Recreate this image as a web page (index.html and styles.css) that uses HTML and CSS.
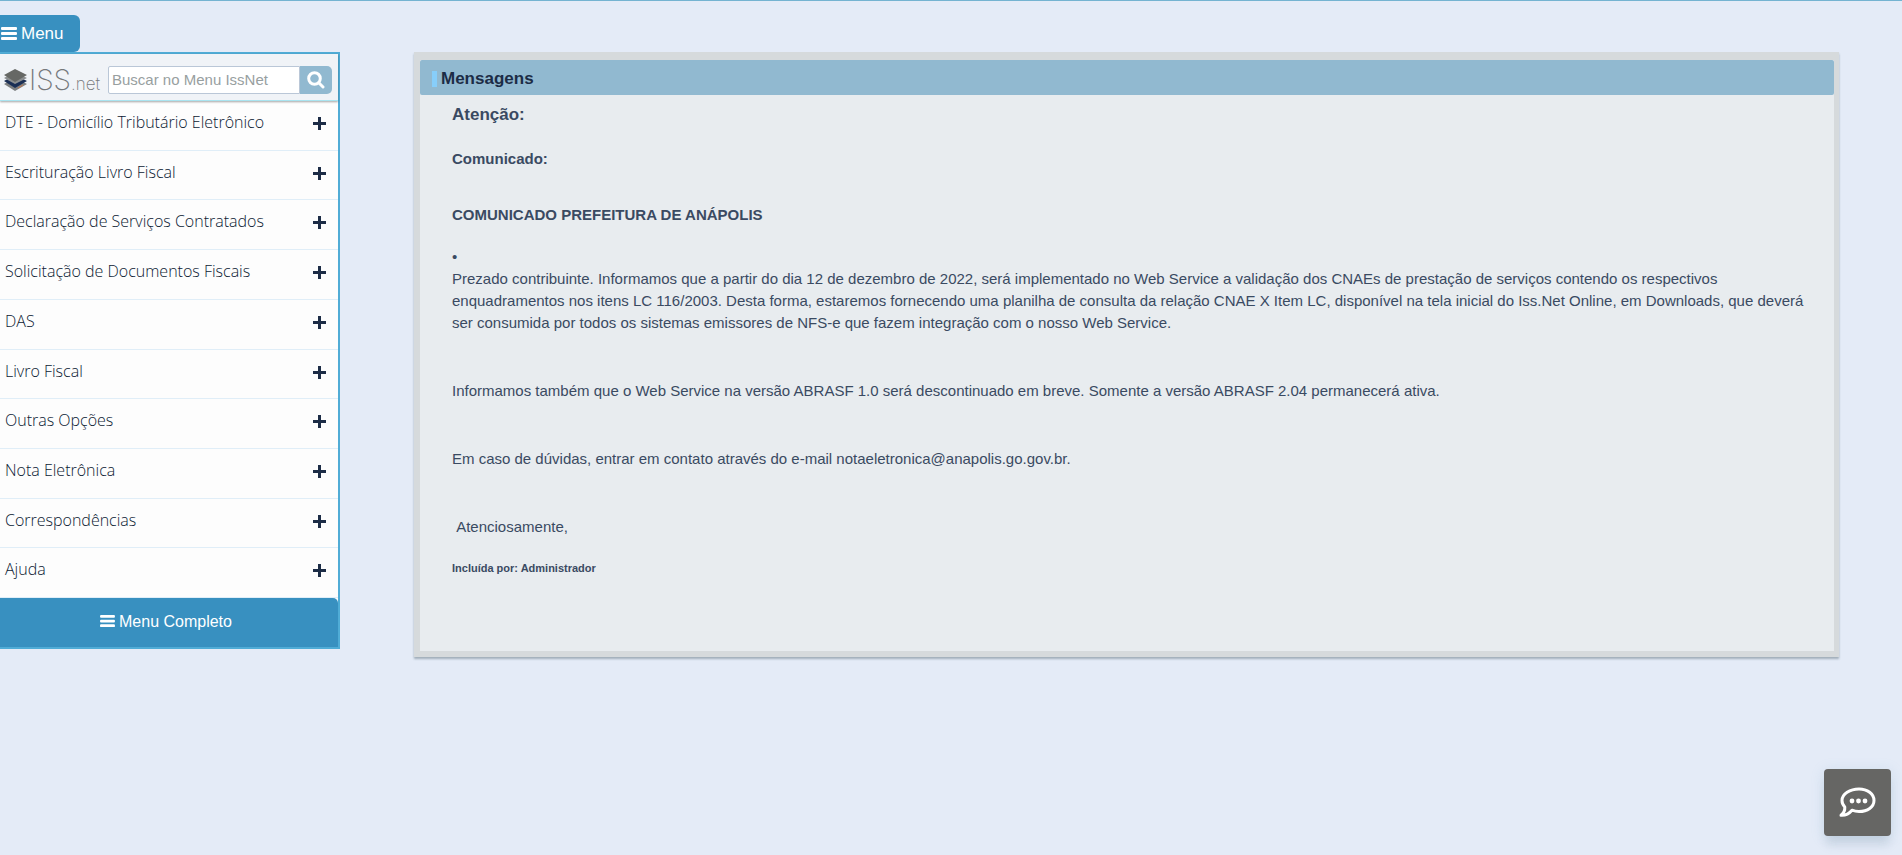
FILE: index.html
```html
<!DOCTYPE html>
<html lang="pt-br">
<head>
  <meta charset="UTF-8">
  <meta name="viewport" content="width=device-width, initial-scale=1.0">
  <title>ISS.net Online</title>
  <link rel="stylesheet" href="styles.css">
</head>
<body>
  <div class="pagina">
    <aside class="lateral">
      <button type="button" class="btn-menu">
        <svg width="16" height="14" viewBox="0 0 16 14" fill="currentColor" aria-hidden="true"><rect y="0" width="16" height="3" rx="1"/><rect y="5" width="16" height="3" rx="1"/><rect y="10" width="16" height="3" rx="1"/></svg>
        Menu
      </button>

      <nav class="menu">
        <form class="busca">
          <a href="#" class="logo" aria-label="ISS.net">
            <svg width="23" height="24" viewBox="0 0 23 24" aria-hidden="true">
              <path d="M0 16 L11 10 L23 16 L11 23 Z" fill="#7d7f80"/>
              <path d="M0 13 L11 7 L23 13 L11 20 Z" fill="#1b2f55"/>
              <path d="M14 20 L19 17" stroke="#c47a50" stroke-width="1"/>
              <path d="M0 10 L11 4 L23 10 L11 16 Z" fill="#8b8e8f"/>
              <path d="M0 7 L11 1 L23 7 L11 14 Z" fill="#666865"/>
            </svg>
            <span class="logo-iss">ISS</span><span class="logo-net">.net</span>
          </a>
          <input type="text" class="busca-campo" placeholder="Buscar no Menu IssNet" aria-label="Buscar no Menu IssNet">
          <button type="submit" class="busca-btn" aria-label="Buscar">
            <svg width="18" height="18" viewBox="0 0 18 18" fill="none" stroke="#fff" aria-hidden="true"><circle cx="7.500" cy="7.500" r="5.800" stroke-width="3"/><path d="M12 12 L16 16" stroke-width="3" stroke-linecap="round"/></svg>
          </button>
        </form>

        <ul class="lista">
          <li><a href="#">DTE - Domicílio Tributário Eletrônico <span class="mais"></span></a></li>
          <li><a href="#">Escrituração Livro Fiscal <span class="mais"></span></a></li>
          <li><a href="#">Declaração de Serviços Contratados <span class="mais"></span></a></li>
          <li><a href="#">Solicitação de Documentos Fiscais <span class="mais"></span></a></li>
          <li><a href="#">DAS <span class="mais"></span></a></li>
          <li><a href="#">Livro Fiscal <span class="mais"></span></a></li>
          <li><a href="#">Outras Opções <span class="mais"></span></a></li>
          <li><a href="#">Nota Eletrônica <span class="mais"></span></a></li>
          <li><a href="#">Correspondências <span class="mais"></span></a></li>
          <li><a href="#">Ajuda <span class="mais"></span></a></li>
        </ul>

        <button type="button" class="btn-completo">
          <svg width="15" height="13" viewBox="0 0 16 14" fill="currentColor" aria-hidden="true"><rect y="0" width="16" height="3" rx="1"/><rect y="5" width="16" height="3" rx="1"/><rect y="10" width="16" height="3" rx="1"/></svg>
          Menu Completo
        </button>
      </nav>
    </aside>

    <main class="mensagens">
      <h1>Mensagens</h1>
      <div class="conteudo">
        <h2>Atenção:</h2>
        <h3 class="comunicado">Comunicado:</h3>
        <h3 class="titulo">COMUNICADO PREFEITURA DE ANÁPOLIS</h3>
        <p class="texto">•<br>Prezado contribuinte. Informamos que a partir do dia 12 de dezembro de 2022, será implementado no Web Service a validação dos CNAEs de prestação de serviços contendo os respectivos enquadramentos nos itens LC 116/2003. Desta forma, estaremos fornecendo uma planilha de consulta da relação CNAE X Item LC, disponível na tela inicial do Iss.Net Online, em Downloads, que deverá ser consumida por todos os sistemas emissores de NFS-e que fazem integração com o nosso Web Service.</p>
        <p class="texto">Informamos também que o Web Service na versão ABRASF 1.0 será descontinuado em breve. Somente a versão ABRASF 2.04 permanecerá ativa.</p>
        <p class="texto">Em caso de dúvidas, entrar em contato através do e-mail notaeletronica@anapolis.go.gov.br.</p>
        <p class="texto">&nbsp;Atenciosamente,</p>
        <p class="autor">Incluída por: Administrador</p>
      </div>
    </main>
  </div>

  <button type="button" class="chat" aria-label="Chat">
    <svg width="37" height="31" viewBox="0 0 37 31" fill="none" stroke="#fff" aria-hidden="true">
      <path d="M20 2 C28.500 2 35 7 35 13.500 C35 20 28.500 24.500 20 24.500 C17.500 24.500 15 24 13 23.200 C10 26.800 6 28.600 2 28.300 C5 26 6 23 5.800 20 C3.800 18 3 16 3 13.500 C3 7 11 2 20 2 Z" stroke-width="3" stroke-linejoin="round"/>
      <g fill="#fff" stroke="none"><circle cx="13" cy="14" r="2.400"/><circle cx="19.500" cy="14" r="2.400"/><circle cx="26" cy="14" r="2.400"/></g>
    </svg>
  </button>
</body>
</html>
```
FILE: styles.css
```css
* {
  box-sizing: border-box;
}
body {
  margin: 0;
  min-height: 100vh;
  background-color: #e4ebf7;
  border-top: 1px solid #74b3d1;
  font-family: "Liberation Sans", Arial, sans-serif;
  font-size: 15px;
  color: #3a4a62;
}
button {
  font-family: inherit;
  border: none;
  cursor: pointer;
}
.pagina {
  display: flex;
  align-items: flex-start;
  gap: 74px;
  padding: 14px 63px 0 0;
}

/* menu lateral */
.lateral {
  flex: 0 0 340px;
  min-width: 0;
}
.btn-menu {
  display: flex;
  align-items: center;
  gap: 4px;
  height: 37px;
  padding: 0 16px 0 1px;
  background-color: #3890c0;
  border-radius: 0 6px 6px 0;
  color: #fff;
  font-size: 17px;
}
.menu {
  background-color: #fdfdfd;
  border: 2px solid #50acd6;
  border-left: none;
}
.busca {
  display: flex;
  align-items: center;
  height: 47px;
  padding: 5px 6px 0 4px;
  background-color: #f0f3f7;
  border-bottom: 1px solid #a9e4f0;
  box-shadow: 0 1px 2px rgba(0, 0, 0, 0.35);
  position: relative;
}
.logo {
  display: flex;
  flex: 0 0 104px;
  align-items: center;
  height: 28px;
  color: #76797c;
  font-family: Inter, Roboto, sans-serif;
  font-weight: 200;
  text-decoration: none;
}
.logo-iss {
  margin-left: 2px;
  font-size: 28px;
  line-height: 28px;
}
.logo-net {
  align-self: flex-end;
  font-size: 17px;
  line-height: 20px;
}
.busca-campo {
  flex: 1;
  min-width: 0;
  height: 28px;
  padding: 0 3px;
  background-color: #fff;
  border: 1px solid #bac7d7;
  border-radius: 2px 0 0 2px;
  font-family: inherit;
  font-size: 15px;
}
.busca-campo::placeholder {
  color: #98a09f;
}
.busca-btn {
  display: flex;
  align-items: center;
  justify-content: center;
  width: 32px;
  height: 28px;
  padding: 0;
  background-color: #91b9d0;
  border-radius: 0 5px 5px 0;
}
.lista {
  display: grid;
  grid-auto-rows: 1fr;
  min-height: 497px;
  margin: 0;
  padding: 0;
  list-style: none;
}
.lista li {
  border-bottom: 1px solid #e0eef8;
}
.lista a {
  display: flex;
  justify-content: space-between;
  padding: 10px 12px 0 5px;
  color: #0c1a33;
  font-family: "Open Sans", sans-serif;
  font-size: 16px;
  font-weight: 300;
  line-height: 22px;
  text-decoration: none;
}
.mais {
  width: 13px;
  height: 13px;
  margin-top: 6px;
  background:
    linear-gradient(#1c2c46, #1c2c46) center / 13px 3px no-repeat,
    linear-gradient(#1c2c46, #1c2c46) center / 3px 13px no-repeat;
}
.btn-completo {
  display: flex;
  align-items: center;
  justify-content: center;
  gap: 4px;
  width: 100%;
  height: 49px;
  padding: 0 6px 2px 0;
  background-color: #3890c0;
  border-radius: 0 5px 0 0;
  color: #fff;
  font-size: 16px;
}

/* painel de mensagens */
.mensagens {
  flex: 1;
  min-width: 0;
  min-height: 605px;
  margin-top: 37px;
  background-color: #e8ecef;
  border: 6px solid #d6dadc;
  border-width: 8px 5px 6px 6px;
  box-shadow: 0 2px 2px rgba(80, 100, 110, 0.45);
}
.mensagens h1 {
  display: flex;
  align-items: center;
  gap: 4px;
  height: 35px;
  margin: 0;
  padding: 2px 12px 0;
  background-color: #91b9d0;
  border-radius: 2px;
  color: #1c2c46;
  font-size: 17px;
}
.mensagens h1::before {
  content: "";
  width: 5px;
  height: 16px;
  background-color: #87cefa;
}
.conteudo {
  padding: 9px 24px 0 32px;
}
.conteudo h2 {
  margin: 0 0 22px;
  font-size: 17px;
  line-height: 22px;
}
.conteudo h3 {
  margin: 0;
  font-size: 15px;
  line-height: 22px;
}
.conteudo .comunicado {
  margin-bottom: 34px;
}
.conteudo .titulo {
  margin-bottom: 20px;
}
.texto {
  margin: 0 0 46px;
  line-height: 22px;
}
.autor {
  margin: -24px 0 0;
  font-size: 11px;
  font-weight: bold;
  line-height: 16px;
}

/* chat flutuante */
.chat {
  position: fixed;
  right: 11px;
  bottom: 19px;
  display: flex;
  align-items: center;
  justify-content: center;
  width: 67px;
  height: 67px;
  padding: 0;
  background-color: #666664;
  border-radius: 4px;
  box-shadow: 0 11px 10px -2px rgba(120, 140, 160, 0.2), 0 2px 14px rgba(120, 170, 200, 0.2);
}
```
